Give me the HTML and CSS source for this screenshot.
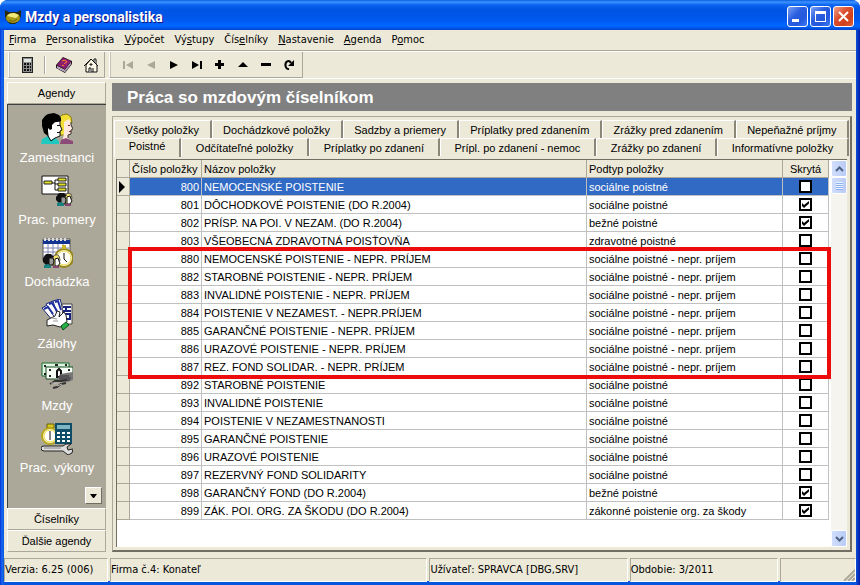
FILE: index.html
```html
<!DOCTYPE html>
<html lang="sk">
<head>
  <meta charset="UTF-8" />
  <meta name="viewport" content="width=device-width, initial-scale=1.0"/>
  <title>Mzdy a personalistika</title>
  <link rel="stylesheet" href="styles.css">
</head>
<body>
  <div class="window">
    <header class="titlebar">
      <svg class="app-icon" width="16" height="16" viewBox="0 0 16 16">
        <path d="M0 1l4 2h8l4-2v6l-2 5-4 3H5l-4-4-1-4z" fill="#2a2a12"/>
        <ellipse cx="8" cy="9" rx="7" ry="5" fill="#a89a18"/>
        <path d="M2 7q2-3 7-3l5 2-3 3-5-1z" fill="#f2ea7a"/>
        <path d="M4 11q4 3 8-1" fill="none" stroke="#6d6410"/>
      </svg>
      <h1>Mzdy a personalistika</h1>
      <div class="window-buttons">
        <button class="win-btn" aria-label="Minimalizovať"><svg width="19" height="19" viewBox="0 0 19 19"><path d="M4 12h7v3H4z" fill="#fff"/></svg></button>
        <button class="win-btn" aria-label="Maximalizovať"><svg width="19" height="19" viewBox="0 0 19 19"><path d="M4 4h11v11H4zM5 7v7h9V7z" fill="#fff" fill-rule="evenodd"/></svg></button>
        <button class="win-btn close" aria-label="Zavrieť"><svg width="19" height="19" viewBox="0 0 19 19"><path d="M5 5l9 9M14 5l-9 9" stroke="#fff" stroke-width="2"/></svg></button>
      </div>
    </header>

    <nav class="menubar">
      <a href="#"><u>F</u>irma</a>
      <a href="#"><u>P</u>ersonalistika</a>
      <a href="#"><u>V</u>ýpočet</a>
      <a href="#">Vý<u>s</u>tupy</a>
      <a href="#">Čís<u>e</u>lníky</a>
      <a href="#"><u>N</u>astavenie</a>
      <a href="#"><u>A</u>genda</a>
      <a href="#">P<u>o</u>moc</a>
    </nav>

    <div class="toolbars">
      <div class="toolbar">
        <button aria-label="Kalkulačka">
          <svg width="16" height="16" viewBox="0 0 16 16">
            <path d="M3 0h11v16H3z" fill="#222"/><path d="M4 1h9v14H4z" fill="#8c8c8c"/>
            <path d="M5 2h7v3H5z" fill="#dfe6df"/>
            <path d="M5 6h2v2H5zM8 6h2v2H8zM11 6h1v2h-1zM5 9h2v2H5zM8 9h2v2H8zM11 9h1v2h-1zM5 12h2v2H5zM8 12h2v2H8zM11 12h1v2h-1z" fill="#111"/>
          </svg>
        </button>
        <span class="separator"></span>
        <button aria-label="Pomocník">
          <svg width="16" height="16" viewBox="0 0 16 16">
            <path d="M0 8L7 0l9 4v3l-7 9-9-5z" fill="#26101f"/>
            <path d="M1 8l6-7 8 3-6 8z" fill="#8d1f72"/>
            <path d="M1 9l8 4 6-8v2l-6 8-8-4z" fill="#fff"/>
            <path d="M1 10l8 4 6-8" fill="none" stroke="#8b7aa0"/>
            <path d="M6 4l3-1 2 2-2 1-1 1" fill="none" stroke="#ff7a2a"/><path d="M6 8h2v1H6z" fill="#ff7a2a"/>
          </svg>
        </button>
        <button aria-label="Domov">
          <svg width="16" height="16" viewBox="0 0 16 16">
            <path d="M11 2h2v5h-2z" fill="#fff" stroke="#111"/>
            <path d="M3 8v7h11V8L8 2z" fill="#fffbe8" stroke="#111"/>
            <path d="M1 9l7-7 7 7" fill="none" stroke="#111"/>
            <path d="M6 15v-4h2v4M10 15v-4M7 7h2v1H7z" fill="#fff" stroke="#111"/>
          </svg>
        </button>
      </div>
      <div class="toolbar navigator">
        <button disabled aria-label="Prvý"><svg width="16" height="16" viewBox="0 0 16 16"><path d="M3 4h2v8H3zM13 4v8L6 8z"/></svg></button>
        <button disabled aria-label="Predchádzajúci"><svg width="16" height="16" viewBox="0 0 16 16"><path d="M12 4v8L4 8z"/></svg></button>
        <button aria-label="Nasledujúci"><svg width="16" height="16" viewBox="0 0 16 16"><path d="M4 4v8l8-4z"/></svg></button>
        <button aria-label="Posledný"><svg width="16" height="16" viewBox="0 0 16 16"><path d="M3 4v8l7-4zM11 4h2v8h-2z"/></svg></button>
        <button aria-label="Pridať"><svg width="16" height="16" viewBox="0 0 16 16"><path d="M6 3h3v3h3v3H9v3H6V9H3V6h3z"/></svg></button>
        <button aria-label="Upraviť"><svg width="16" height="16" viewBox="0 0 16 16"><path d="M3 10l5-5 5 5z"/></svg></button>
        <button aria-label="Vymazať"><svg width="16" height="16" viewBox="0 0 16 16"><path d="M3 6h10v3H3z"/></svg></button>
        <button aria-label="Obnoviť"><svg width="16" height="16" viewBox="0 0 16 16"><path d="M8 12a3 4 0 1 1 2-6" fill="none" stroke="#000" stroke-width="2"/><path d="M13 3v6H7z"/></svg></button>
      </div>
    </div>

    <div class="body">
      <aside class="sidebar">
        <button class="group-btn">Agendy</button>
        <div class="agenda">
          <a href="#">
            <svg width="32" height="32" viewBox="0 0 32 32">
              <path d="M18 5l3-3 5-1 4 3 1 6-3 2-5 10-4 0z" fill="#f2df35" stroke="#8a7c10"/>
              <path d="M23 9l5-3 2 4v3l2 3-2 1v4l-3 1v5h-5l1-9z" fill="#ffe9df"/>
              <path d="M30 9v3l2 4-2 1v4l-3 1v3" fill="none" stroke="#333"/>
              <path d="M27 12h2v1h-2zM28 18h2v1h-2z" fill="#8b2020"/>
              <path d="M19 31l1-4 5-2 4 2 3 1v3z" fill="#8b4a78"/>
              <path d="M6 14l6-5 7-1v4l2 5-2 1v5l-5 2v5H8z" fill="#fff" stroke="#111"/>
              <path d="M16 12h3v1h-3zM16 19h3v1h-3z" fill="#111"/>
              <path d="M1 7l3-4 3-2 6-1 5 2 2 3v3l-6 1-3 3v4l-2 1-2-2v8l-4-3-2-7z" fill="#000"/>
              <path d="M0 31l1-5 6-3 3 4 4-2 4 3v3z" fill="#20c8c0"/>
              <path d="M7 23l3 5 4-3" fill="none" stroke="#111"/>
            </svg>
            Zamestnanci
          </a>
          <a href="#">
            <svg width="32" height="32" viewBox="0 0 32 32">
              <path d="M1 1h26v18H1z" fill="#fff" stroke="#111"/>
              <path d="M3 6h8v3H3zM17 3h8v3h-8zM17 8h8v3h-8zM17 13h8v3h-8z" fill="#e0df28" stroke="#222"/>
              <path d="M11 8h3v7h3M14 8V5h3M14 9h3" fill="none" stroke="#111"/>
              <path d="M24 20q3-3 6-1l1 4-3 6h-4z" fill="#f5e36a" stroke="#555"/>
              <path d="M26 22l3-1 1 3 1 2-2 3h-3z" fill="#fff" stroke="#111"/>
              <path d="M15 22l3-4h5l3 3-3 1-1 5-4 1-3-3z" fill="#111"/>
              <path d="M20 22h4l1 3-1 4h-4z" fill="#999" stroke="#111"/>
              <path d="M16 31v-3l4-1 3 2v2z" fill="#178080"/><path d="M24 31v-2h6v2z" fill="#844670"/>
            </svg>
            Prac. pomery
          </a>
          <a href="#">
            <svg width="32" height="32" viewBox="0 0 32 32">
              <path d="M2 2h27v22H2z" fill="#fff" stroke="#555"/>
              <path d="M2 3h27v4H2z" fill="#123490"/>
              <path d="M3 1h2v3H3zM7 1h2v3H7zM11 1h2v3h-2zM15 1h2v3h-2zM19 1h2v3h-2zM23 1h2v3h-2z" fill="#ddd"/>
              <path d="M2 11h26M2 15h26M2 19h26M7 7v17M12 7v17M17 7v10M22 7v8" stroke="#8084b0"/>
              <circle cx="23" cy="21" r="9" fill="#fffce0" stroke="#94861c" stroke-width="2"/>
              <circle cx="23" cy="21" r="7" fill="#fff" stroke="#e6d644"/>
              <path d="M21 8h4v4h-4z" fill="#c6b62c"/><path d="M23 16v6l3 3" fill="none" stroke="#111"/>
              <path d="M12 20q3-4 6-1l1 4-3 6h-4z" fill="#f5e36a" stroke="#555"/>
              <path d="M14 22l3-1 1 3 1 2-2 3h-3z" fill="#fff" stroke="#111"/>
              <path d="M2 21l3-4h5l3 3-3 1-1 6-4 1-3-3z" fill="#111"/>
              <path d="M8 21h4l1 3-1 4H8z" fill="#999" stroke="#111"/>
              <path d="M3 31v-3l4-1 3 2v2z" fill="#178080"/><path d="M12 31v-2h6v2z" fill="#844670"/>
            </svg>
            Dochádzka
          </a>
          <a href="#">
            <svg width="32" height="32" viewBox="0 0 32 32">
              <path d="M1 9l7-4 9 10-5 7z" fill="#fff" stroke="#18247c"/>
              <path d="M5 5l7-3 8 12-6 5z" fill="#fff" stroke="#18247c"/>
              <path d="M12 2l7-2 4 14-6 4z" fill="#fff" stroke="#18247c"/>
              <path d="M3 10l4-2 5 7M8 5l3-1 5 8M14 3l3-1 3 9" fill="none" stroke="#2030a0" stroke-width="2"/>
              <path d="M21 5h10v20h-9z" fill="#fff" stroke="#444"/>
              <path d="M22 8h8M22 12h8M25 8v4M24 15h5v5h-5z" fill="none" stroke="#18247c" stroke-width="2"/>
              <path d="M6 21l8-4 2-5 3 1-1 5 5-5 2 3 1 7-3 4-4 1-7-2-6 1z" fill="#fff" stroke="#222"/>
              <path d="M11 19l5 1M12 22l5 0" stroke="#999"/>
              <path d="M20 27l5-4 3 3-6 5z" fill="#28b048" stroke="#0a5018"/>
            </svg>
            Zálohy
          </a>
          <a href="#">
            <svg width="32" height="32" viewBox="0 0 32 32">
              <path d="M1 2h27v13H1z" fill="#dff5df" stroke="#176b2c"/>
              <path d="M5 6h27v12H5z" fill="#f5fff5" stroke="#174b22"/>
              <path d="M3 4h2v2H3zM24 3h2v2h-2zM3 12h2v2H3zM8 8h2v2H8zM27 8h2v2h-2zM8 14h2v2H8zM14 3h3v2h-3z" fill="#222"/>
              <path d="M16 10l2-2 2 2v6h-4z" fill="#fff" stroke="#111" stroke-width="2"/>
              <path d="M20 13l5-1 7-1v8l-5 2-7-1-4-2z" fill="#777"/>
              <path d="M18 15h10M18 17h12M19 19h10" stroke="#333"/>
              <path d="M9 23l5-3 6 0 6-1M12 27l4-1 4-3 5-1" fill="none" stroke="#333" stroke-width="2"/>
              <path d="M10 22l6 0M16 25l5-2" stroke="#bbb"/>
            </svg>
            Mzdy
          </a>
          <a href="#">
            <svg width="32" height="32" viewBox="0 0 32 32">
              <path d="M6 1h7v4H6z" fill="#d8c820" stroke="#6b5f00"/>
              <circle cx="9" cy="13" r="8" fill="#fffce0" stroke="#b7a71f" stroke-width="2"/>
              <circle cx="9" cy="13" r="6" fill="#fff" stroke="#eada3a"/>
              <path d="M9 8v9" fill="none" stroke="#111"/>
              <path d="M14 0h17v21H14z" fill="#0d4d68"/>
              <path d="M16 2h13v4H16z" fill="#7fb4c4"/>
              <path d="M16 9h3v2h-3zM21 9h3v2h-3zM26 9h3v2h-3zM16 13h3v2h-3zM21 13h3v2h-3zM26 13h3v2h-3zM16 17h3v2h-3zM21 17h3v2h-3zM26 17h3v2h-3z" fill="#fff"/>
              <path d="M0 25q0-2 3-2h19l3-2h5l-4 3 1 3 5-1-1 4-4 2-5-4H3q-3 0-3-3z" fill="#ddd" stroke="#222"/>
              <path d="M3 25h17" stroke="#888"/>
            </svg>
            Prac. výkony
          </a>
          <button class="scroll-down" aria-label="Ďalšie položky"><svg width="7" height="4" viewBox="0 0 7 4"><path d="M0 0h7L4 4H3z"/></svg></button>
        </div>
        <button class="group-btn">Číselníky</button>
        <button class="group-btn">Ďalšie agendy</button>
      </aside>

      <main class="content">
        <h2>Práca so mzdovým číselníkom</h2>
        <section class="panel">
          <div class="tabs" role="tablist">
            <div class="tab-row">
              <button role="tab">Všetky položky</button>
              <button role="tab">Dochádzkové položky</button>
              <button role="tab">Sadzby a priemery</button>
              <button role="tab">Príplatky pred zdanením</button>
              <button role="tab">Zrážky pred zdanením</button>
              <button role="tab">Nepeňažné príjmy</button>
            </div>
            <div class="tab-row">
              <button role="tab" class="active" aria-selected="true">Poistné</button>
              <button role="tab">Odčítateľné položky</button>
              <button role="tab">Príplatky po zdanení</button>
              <button role="tab">Prípl. po zdanení - nemoc</button>
              <button role="tab">Zrážky po zdanení</button>
              <button role="tab">Informatívne položky</button>
            </div>
          </div>

          <div class="grid">
            <div class="grid-table">
              <table>
                <colgroup>
                  <col class="col-mark"><col class="col-number"><col><col class="col-type"><col class="col-hidden">
                </colgroup>
                <thead>
                  <tr><th></th><th>Číslo položky</th><th>Názov položky</th><th>Podtyp položky</th><th class="center">Skrytá</th></tr>
                </thead>
                <tbody>
                  <tr class="selected"><td><svg width="6" height="12" viewBox="0 0 6 12"><path d="M0 0l6 6-6 6z"/></svg></td><td>800</td><td>NEMOCENSKÉ POISTENIE</td><td>sociálne poistné</td><td><input type="checkbox" aria-label="Skrytá 800"></td></tr>
                  <tr><td></td><td>801</td><td>DÔCHODKOVÉ POISTENIE (DO R.2004)</td><td>sociálne poistné</td><td><input type="checkbox" aria-label="Skrytá 801" checked></td></tr>
                  <tr><td></td><td>802</td><td>PRÍSP. NA POI. V NEZAM. (DO R.2004)</td><td>bežné poistné</td><td><input type="checkbox" aria-label="Skrytá 802" checked></td></tr>
                  <tr><td></td><td>803</td><td>VŠEOBECNÁ ZDRAVOTNÁ POISŤOVŇA</td><td>zdravotné poistné</td><td><input type="checkbox" aria-label="Skrytá 803"></td></tr>
                </tbody>
                <tbody class="marked">
                  <tr><td></td><td>880</td><td>NEMOCENSKÉ POISTENIE - NEPR. PRÍJEM</td><td>sociálne poistné - nepr. príjem</td><td><input type="checkbox" aria-label="Skrytá 880"></td></tr>
                  <tr><td></td><td>882</td><td>STAROBNÉ POISTENIE - NEPR. PRÍJEM</td><td>sociálne poistné - nepr. príjem</td><td><input type="checkbox" aria-label="Skrytá 882"></td></tr>
                  <tr><td></td><td>883</td><td>INVALIDNÉ POISTENIE - NEPR. PRÍJEM</td><td>sociálne poistné - nepr. príjem</td><td><input type="checkbox" aria-label="Skrytá 883"></td></tr>
                  <tr><td></td><td>884</td><td>POISTENIE V NEZAMEST. - NEPR.PRÍJEM</td><td>sociálne poistné - nepr. príjem</td><td><input type="checkbox" aria-label="Skrytá 884"></td></tr>
                  <tr><td></td><td>885</td><td>GARANČNÉ POISTENIE - NEPR. PRÍJEM</td><td>sociálne poistné - nepr. príjem</td><td><input type="checkbox" aria-label="Skrytá 885"></td></tr>
                  <tr><td></td><td>886</td><td>URAZOVÉ POISTENIE - NEPR. PRÍJEM</td><td>sociálne poistné - nepr. príjem</td><td><input type="checkbox" aria-label="Skrytá 886"></td></tr>
                  <tr><td></td><td>887</td><td>REZ. FOND SOLIDAR. - NEPR. PRÍJEM</td><td>sociálne poistné - nepr. príjem</td><td><input type="checkbox" aria-label="Skrytá 887"></td></tr>
                </tbody>
                <tbody>
                  <tr><td></td><td>892</td><td>STAROBNÉ POISTENIE</td><td>sociálne poistné</td><td><input type="checkbox" aria-label="Skrytá 892"></td></tr>
                  <tr><td></td><td>893</td><td>INVALIDNÉ POISTENIE</td><td>sociálne poistné</td><td><input type="checkbox" aria-label="Skrytá 893"></td></tr>
                  <tr><td></td><td>894</td><td>POISTENIE V NEZAMESTNANOSTI</td><td>sociálne poistné</td><td><input type="checkbox" aria-label="Skrytá 894"></td></tr>
                  <tr><td></td><td>895</td><td>GARANČNÉ POISTENIE</td><td>sociálne poistné</td><td><input type="checkbox" aria-label="Skrytá 895"></td></tr>
                  <tr><td></td><td>896</td><td>URAZOVÉ POISTENIE</td><td>sociálne poistné</td><td><input type="checkbox" aria-label="Skrytá 896"></td></tr>
                  <tr><td></td><td>897</td><td>REZERVNÝ FOND SOLIDARITY</td><td>sociálne poistné</td><td><input type="checkbox" aria-label="Skrytá 897"></td></tr>
                  <tr><td></td><td>898</td><td>GARANČNÝ FOND (DO R.2004)</td><td>bežné poistné</td><td><input type="checkbox" aria-label="Skrytá 898" checked></td></tr>
                  <tr><td></td><td>899</td><td>ZÁK. POI. ORG. ZA ŠKODU (DO R.2004)</td><td>zákonné poistenie org. za škody</td><td><input type="checkbox" aria-label="Skrytá 899" checked></td></tr>
                </tbody>
              </table>
            </div>
            <div class="scrollbar">
              <button aria-label="Hore"><svg width="9" height="6" viewBox="0 0 9 6"><path d="M1 5l3.500-3.500L8 5" fill="none" stroke="#4d6185" stroke-width="2"/></svg></button>
              <span class="thumb"></span>
              <button class="down" aria-label="Dole"><svg width="9" height="6" viewBox="0 0 9 6"><path d="M1 1l3.500 3.500L8 1" fill="none" stroke="#4d6185" stroke-width="2"/></svg></button>
            </div>
          </div>
        </section>
      </main>
    </div>

    <footer class="statusbar">
      <span>Verzia: 6.25 (006)</span>
      <span>Firma č.4: Konateľ</span>
      <span>Užívateľ: SPRAVCA [DBG,SRV]</span>
      <span>Obdobie: 3/2011</span>
      <span class="grip"><svg width="12" height="12" viewBox="0 0 12 12"><path d="M1 12L12 1M5 12l7-7M9 12l3-3" stroke="#aca899" stroke-width="2"/></svg></span>
    </footer>
  </div>
</body>
</html>
```
FILE: styles.css
```css
* {
  box-sizing: border-box;
}
body {
  margin: 0;
  background-color: #fff;
  color: #000;
  font-family: "Liberation Sans", Arial, sans-serif;
  font-size: 11px;
  line-height: 14px;
}
button {
  font: inherit;
  color: inherit;
  padding: 0;
  border: none;
  background: none;
}
a {
  color: inherit;
  text-decoration: none;
}
svg {
  display: block;
}

.window {
  display: flex;
  flex-direction: column;
  min-height: 100vh;
  padding: 0 4px 4px;
  border-radius: 8px 8px 0 0;
  background: linear-gradient(to right, #0831d9, #166aee 2px, #0855dd 4px, #0855dd calc(100% - 4px), #0a3fd0 calc(100% - 3px), #001ea0);
}
.titlebar {
  display: flex;
  align-items: center;
  gap: 4px;
  height: 30px;
  margin: 0 -4px;
  padding: 3px 6px 0 5px;
  border-radius: 8px 8px 0 0;
  background: linear-gradient(#0a5be0, #3d95ff 2px, #0a63f0 5px, #0054e3 10px, #0058ee 20px, #0066ff 25px, #0061f5 27px, #0042cc 30px);
}
.titlebar h1 {
  flex: 1;
  margin: 0;
  color: #fff;
  font: bold 14px Roboto, sans-serif;
  text-shadow: 1px 1px #0f1089;
}
.window-buttons {
  display: flex;
  gap: 2px;
}
.win-btn {
  width: 21px;
  height: 21px;
  border: 1px solid #fff;
  border-radius: 3px;
  background: linear-gradient(135deg, #7ba2f5, #2a5fe0 40%, #2458dd 70%, #3d7cf5);
}
.win-btn.close {
  background: linear-gradient(135deg, #f0a08a, #dd5030 40%, #d0401c 70%, #e0603a);
}

.menubar {
  display: flex;
  align-items: center;
  gap: 10px;
  height: 20px;
  padding: 0 5px;
  background-color: #ece9d8;
  font-family: "DejaVu Sans Condensed", "DejaVu Sans", sans-serif;
}
.toolbars {
  display: flex;
  gap: 4px;
  height: 29px;
  padding: 1px 4px 0;
  border-top: 1px solid #aca899;
  border-bottom: 1px solid #fff;
  background-color: #ece9d8;
  box-shadow: inset 0 1px #fff;
}
.toolbar {
  display: flex;
  align-items: center;
  padding-left: 4px;
  border-right: 1px solid #aca899;
  border-bottom: 1px solid #aca899;
  border-left: 1px solid #fff;
  box-shadow: inset 1px 0 #c5c2b2;
}
.toolbar button {
  display: flex;
  justify-content: center;
  width: 27px;
}
.toolbar.navigator {
  padding: 0 2px 0 6px;
}
.toolbar.navigator button {
  width: 23px;
}
.toolbar button:disabled {
  fill: #aca899;
}
.separator {
  width: 2px;
  height: 18px;
  margin: 0 4px;
  border-left: 1px solid #aca899;
  border-right: 1px solid #fff;
}

.body {
  flex: 1;
  display: flex;
  gap: 6px;
  padding: 3px 4px 4px 3px;
  background-color: #ece9d8;
}
.sidebar {
  display: flex;
  flex-direction: column;
  width: 99px;
}
.group-btn {
  height: 22px;
  border: 1px solid #aca899;
  border-top-color: #fff;
  border-left-color: #fff;
  background-color: #ece9d8;
}
.agenda {
  flex: 1;
  display: flex;
  flex-direction: column;
  gap: 8px;
  padding: 8px 0 4px;
  border-top: 1px solid #404040;
  border-left: 1px solid #404040;
  background-color: #aca899;
  color: #fff;
}
.agenda a {
  display: flex;
  flex-direction: column;
  align-items: center;
  gap: 4px;
  font-size: 13px;
  line-height: 18px;
}
.scroll-down {
  display: flex;
  align-items: center;
  justify-content: center;
  align-self: flex-end;
  width: 17px;
  height: 17px;
  margin: auto 4px 0 0;
  border: 1px solid #716f64;
  border-top-color: #fff;
  border-left-color: #fff;
  background-color: #ece9d8;
}

.content {
  flex: 1;
  display: flex;
  flex-direction: column;
  gap: 5px;
  min-width: 0;
}
.content h2 {
  margin: 1px 0 0;
  padding: 5px 15px 3px;
  background-color: #808080;
  color: #fff;
  font-size: 17px;
  line-height: 20px;
}
.panel {
  flex: 1;
  display: flex;
  flex-direction: column;
  padding: 3px 1px 3px 1px;
  border: 1px solid #aca899;
  border-right: 2px solid #716f64;
  border-bottom: 2px solid #716f64;
}
.tab-row {
  display: flex;
}
.tab-row button {
  flex: 1 1 auto;
  height: 18px;
  border-top: 1px solid #fff;
  border-left: 1px solid #fff;
  border-right: 2px solid #8a8778;
}
.tab-row button.active {
  height: 19px;
  padding-bottom: 4px;
}

.grid {
  flex: 1;
  display: flex;
  margin: 2px 2px 0;
  border-top: 1px solid #716f64;
  border-left: 1px solid #716f64;
  background-color: #fff;
}
.grid-table {
  flex: 1;
  padding-right: 2px;
}
table {
  width: 100%;
  table-layout: fixed;
  border-collapse: separate;
  border-spacing: 0;
}
.col-mark {
  width: 13px;
}
.col-number {
  width: 72px;
}
.col-type {
  width: 196px;
}
.col-hidden {
  width: 46px;
}
th,
td {
  height: 18px;
  padding: 0 2px;
  border-right: 1px solid #c0c0c0;
  border-bottom: 1px solid #c0c0c0;
  line-height: 16px;
  text-align: left;
  white-space: nowrap;
}
th {
  border-color: #aca899;
  background-color: #ece9d8;
  font-weight: normal;
}
th.center,
td:last-child {
  text-align: center;
}
td:nth-child(2) {
  text-align: right;
}
td:first-child {
  border-color: #aca899;
  background-color: #ece9d8;
}
.selected td:not(:first-child) {
  background-color: #316ac5;
  color: #fff;
}
input[type="checkbox"] {
  appearance: none;
  display: block;
  width: 13px;
  height: 13px;
  margin: 0 auto;
  border: 2px solid #000;
  background-color: #fff;
}
input[type="checkbox"]:checked::before {
  content: "";
  display: block;
  width: 7px;
  height: 7px;
  margin: 1px;
  background-color: #000;
  clip-path: polygon(0 29%, 29% 57%, 100% 0, 100% 36%, 29% 100%, 0 71%);
}

/* red frame around the rows for irregular income */
.marked {
  position: relative;
}
.marked::after {
  content: "";
  position: absolute;
  inset: -3px -2px -3px 11px;
  border: 4px solid #ed0c0c;
  pointer-events: none;
}

.scrollbar {
  display: flex;
  flex-direction: column;
  width: 16px;
  background-color: #f5f4ef;
}
.scrollbar button,
.thumb {
  display: flex;
  align-items: center;
  justify-content: center;
  height: 17px;
  border: 1px solid #fff;
  border-radius: 2px;
  background: linear-gradient(to right, #d0defc, #b9cbf5);
}
.thumb::before {
  content: "";
  width: 7px;
  height: 8px;
  background: repeating-linear-gradient(#eef4fe 0 1px, #8cb0f8 1px 2px);
}
.scrollbar .down {
  margin-top: auto;
}

.statusbar {
  display: grid;
  grid-template-columns: 104px 317fr 198fr 148fr 76fr;
  gap: 2px;
  height: 25px;
  padding-top: 2px;
  background-color: #ece9d8;
  font-family: "DejaVu Sans Condensed", "DejaVu Sans", sans-serif;
}
.statusbar span {
  padding: 4px 0;
  border: 1px solid #aca899;
  border-right-color: #fff;
  border-bottom-color: #fff;
  white-space: nowrap;
}
.statusbar .grip {
  display: flex;
  align-items: flex-end;
  justify-content: flex-end;
  padding: 0;
}
```
